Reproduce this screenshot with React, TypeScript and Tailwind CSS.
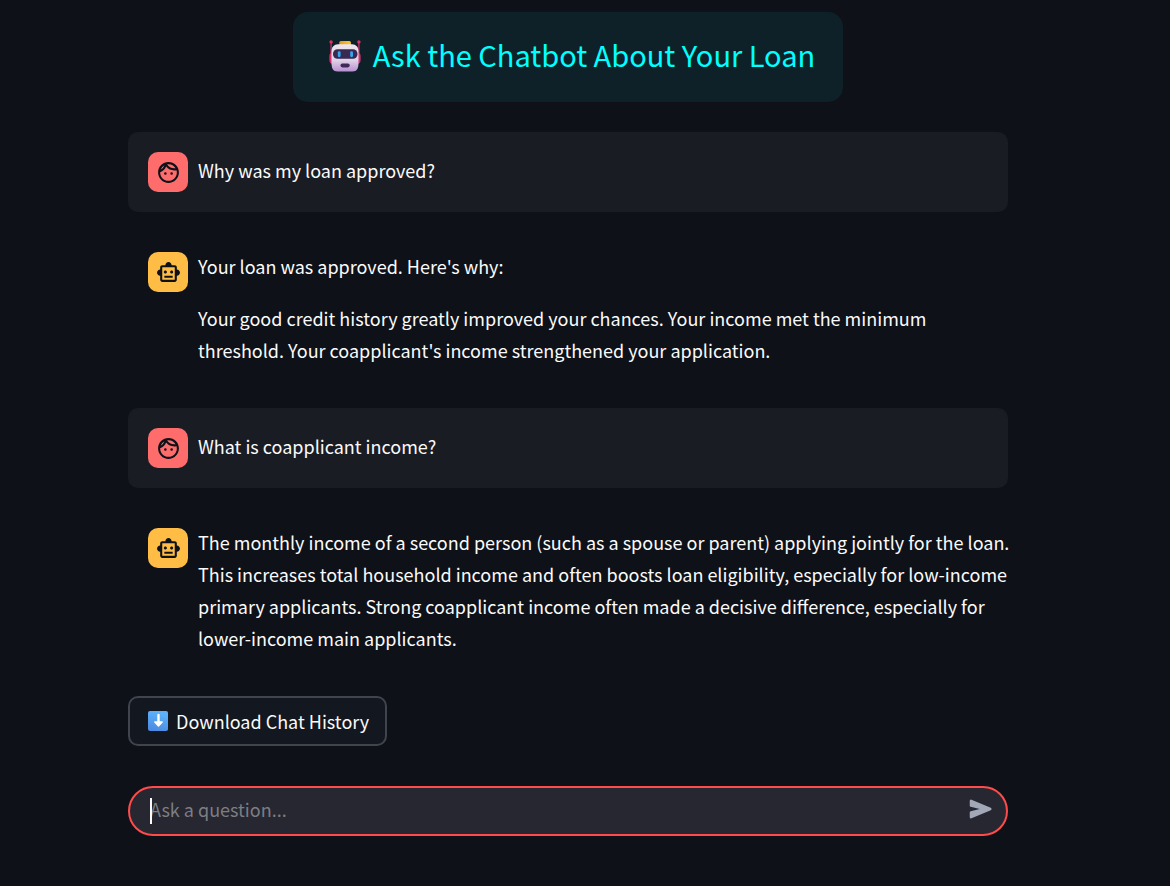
import { useState, type ReactNode } from "react";
import { MdOutlineFace, MdOutlineSmartToy } from "react-icons/md";

function RobotEmoji() {
  return (
    <svg viewBox="0 0 32 32" className="size-8 shrink-0" aria-hidden="true">
      <defs>
        <linearGradient id="robot-head" x1="0" y1="0" x2="0" y2="1">
          <stop offset="0" stopColor="#eee6f0" />
          <stop offset="0.6" stopColor="#ded0e6" />
          <stop offset="1" stopColor="#b98fd3" />
        </linearGradient>
        <linearGradient id="robot-hat" x1="0" y1="0" x2="1" y2="0">
          <stop offset="0" stopColor="#e79a2a" />
          <stop offset="1" stopColor="#fcc832" />
        </linearGradient>
        <linearGradient id="robot-ear" x1="0" y1="0" x2="0" y2="1">
          <stop offset="0" stopColor="#e0305c" />
          <stop offset="1" stopColor="#d42f86" />
        </linearGradient>
      </defs>
      <path d="M1.400 2h1.400v13H1.400zM29.200 2h1.400v13h-1.400z" fill="#b83366" />
      <circle cx="2.1" cy="1.9" r="1.7" fill="#e5305d" />
      <circle cx="29.9" cy="1.9" r="1.7" fill="#e5305d" />
      <path d="M4 12.5C1.5 12.5.4 14 .4 16v4c0 2.500 1.300 4 3.600 4zM28 12.500c2.500 0 3.600 1.500 3.600 3.500v4c0 2.500-1.300 4-3.600 4z" fill="url(#robot-ear)" />
      <rect x="10.300" y="1" width="11.600" height="5" rx="1.500" fill="url(#robot-hat)" />
      <path d="M9 4.200h14c4 0 6.500 3 6.500 7V23c0 5-1.500 8.500-6 8.500h-15c-4.500 0-6-3.500-6-8.500V11.200c0-4 2.500-7 6.500-7z" fill="url(#robot-head)" />
      <rect x="4" y="9.200" width="24.500" height="9.600" rx="4.500" fill="#382a53" />
      <rect x="8.800" y="11.200" width="2.800" height="6" rx="1.400" fill="#35a7ed" />
      <rect x="21.200" y="11.200" width="2.800" height="6" rx="1.400" fill="#35a7ed" />
      <rect x="11.500" y="23.400" width="9.200" height="4" rx="1.800" fill="#3d2a58" />
    </svg>
  );
}

function DownEmoji() {
  return (
    <svg viewBox="0 0 20 20" className="size-5 shrink-0" aria-hidden="true">
      <defs>
        <linearGradient id="down-tile" x1="0" y1="1" x2="0.3" y2="0">
          <stop offset="0" stopColor="#4a86e0" />
          <stop offset="1" stopColor="#5cb2fa" />
        </linearGradient>
      </defs>
      <rect width="20" height="20" rx="2" fill="url(#down-tile)" />
      <path d="M10.500 4v8" fill="none" stroke="#fff" strokeWidth="2.400" strokeLinecap="round" />
      <path d="M6.800 11l3.700 3.900 3.700-3.900z" fill="#fff" stroke="#fff" strokeWidth="1.400" strokeLinejoin="round" />
    </svg>
  );
}

function SendIcon() {
  return (
    <svg viewBox="0 -960 960 960" className="size-[30px]" fill="currentColor" aria-hidden="true">
      <path d="M792-443 176-183q-20 8-38-3.500T120-220v-151q0-14 8-25t22-14l290-70-290-70q-14-3-22-14t-8-25v-151q0-22 18-33.500t38-3.500l616 260q25 11 25 37t-25 37Z" />
    </svg>
  );
}

function UserMessage({ children }: { children: ReactNode }) {
  return (
    <article className="flex items-center gap-[10px] rounded-[10px] bg-[#1a1c24] p-5">
      <div className="flex size-10 shrink-0 items-center justify-center rounded-[10px] bg-[#ff6c6c] text-[#0e1117]">
        <MdOutlineFace className="size-[25px]" />
      </div>
      <p className="pb-1">{children}</p>
    </article>
  );
}

function AssistantMessage({ children }: { children: ReactNode }) {
  return (
    <article className="flex items-start gap-[10px] pt-[18px] pb-[22px] pl-5">
      <div className="mt-0.5 flex size-10 shrink-0 items-center justify-center rounded-[10px] bg-[#ffbd45] text-[#0e1117]">
        <MdOutlineSmartToy className="size-[25px]" />
      </div>
      <div className="-mr-2 flex min-w-0 flex-1 flex-col gap-5">{children}</div>
    </article>
  );
}

export default function App() {
  const [question, setQuestion] = useState("");

  return (
    <div className="min-h-screen bg-[#0e1117] pr-[34px] font-['Noto_Sans_CJK_SC',sans-serif] text-[18px] leading-8 text-[#fafafa]">
      <main className="mx-auto flex max-w-[880px] flex-col gap-5 pt-3 pb-12">
        <h1 className="mb-[10px] flex items-center gap-3 self-center rounded-[15px] bg-[#0e2129] pt-6 pr-7 pb-[26px] pl-9 text-[29px] font-normal text-[#00ffff]">
          <RobotEmoji />
          <span className="pb-1 leading-9">Ask the Chatbot About Your Loan</span>
        </h1>

        <UserMessage>Why was my loan approved?</UserMessage>
        <AssistantMessage>
          <p>Your loan was approved. Here's why:</p>
          <p>
            Your good credit history greatly improved your chances. Your income met the minimum threshold. Your
            coapplicant's income strengthened your application.
          </p>
        </AssistantMessage>
        <UserMessage>What is coapplicant income?</UserMessage>
        <AssistantMessage>
          <p>
            The monthly income of a second person (such as a spouse or parent) applying jointly for the loan. This
            increases total household income and often boosts loan eligibility, especially for low-income primary
            applicants. Strong coapplicant income often made a decisive difference, especially for lower-income main
            applicants.
          </p>
        </AssistantMessage>

        <button
          type="button"
          className="flex h-[50px] items-center gap-2 self-start rounded-[10px] border-2 border-[#41444c] bg-[#13171f] pr-4 pl-[18px]"
        >
          <DownEmoji />
          Download Chat History
        </button>

        <form
          className="relative mt-5 flex h-[50px] items-center rounded-full border-2 border-[#ff4b4b] bg-[#262730] pr-[10px] pb-1 pl-5"
          onSubmit={(event) => {
            event.preventDefault();
            setQuestion("");
          }}
        >
          <input
            type="text"
            aria-label="Ask a question"
            placeholder="Ask a question..."
            value={question}
            onChange={(event) => setQuestion(event.target.value)}
            className="min-w-0 flex-1 bg-transparent text-[#fafafa] outline-none placeholder:text-[#7d7d83]"
          />
          {question === "" && <span className="absolute top-[10px] left-5 h-[26px] w-0.5 bg-[#fafafa]" />}
          <button type="submit" aria-label="Send" className="text-[#a3a8b8]">
            <SendIcon />
          </button>
        </form>
      </main>
    </div>
  );
}
